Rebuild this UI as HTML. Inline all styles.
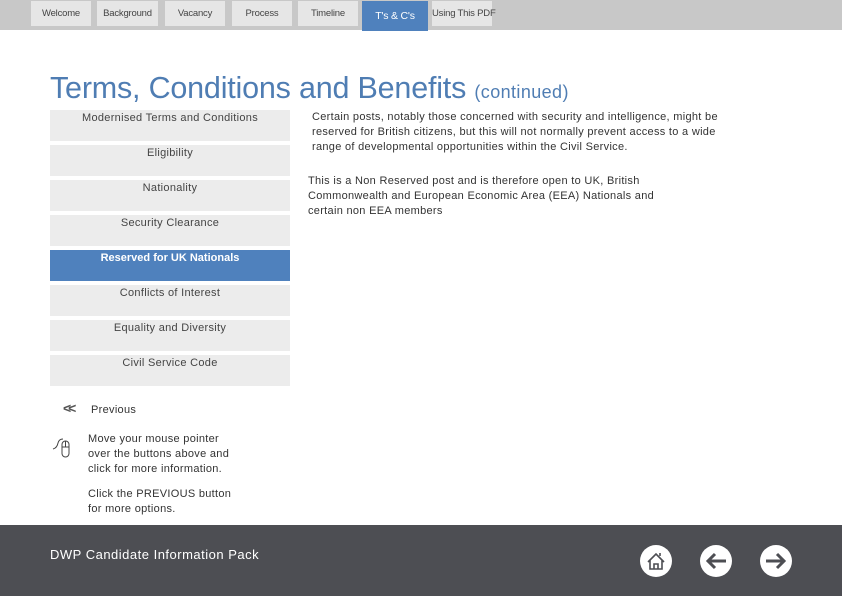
<!DOCTYPE html>
<html><head><style>
*{margin:0;padding:0;box-sizing:border-box}
body{width:842px;height:596px;position:relative;background:#fff;font-family:"Liberation Sans",Arial,sans-serif;overflow:hidden;color:#333}
.nav{position:absolute;left:0;top:0;width:842px;height:30px;background:#c8c8c8}
.tab{position:absolute;top:1px;height:25px;background:#e6e6e6;font-size:9.5px;color:#444;text-align:center;line-height:25px;white-space:nowrap;letter-spacing:-0.2px}
.tab.act{background:#4f81bd;color:#fff;height:30px;line-height:31px;font-size:10.5px}
h1{position:absolute;left:50px;top:71px;font-weight:normal;font-size:30.5px;color:#4f7db3;letter-spacing:-0.2px;white-space:nowrap}
h1 span{font-size:18px;letter-spacing:0.4px}
.btn{position:absolute;left:50px;width:240px;height:31px;background:#ececec;font-size:11px;color:#444;text-align:center;padding-top:2px;letter-spacing:0.3px}
.btn.act{background:#4f81bd;color:#fff;font-weight:bold;letter-spacing:0}
.txt{position:absolute;font-size:11px;line-height:15px;color:#333;letter-spacing:0.3px}
.foot{position:absolute;left:0;top:525px;width:842px;height:71px;background:#4d4e53}
.ic{position:absolute;top:545px;width:32px;height:32px;border-radius:50%;background:#fff}
</style></head><body>
<div class="nav">
<div class="tab" style="left:31px;width:60px">Welcome</div>
<div class="tab" style="left:97px;width:61px">Background</div>
<div class="tab" style="left:165px;width:60px">Vacancy</div>
<div class="tab" style="left:232px;width:60px">Process</div>
<div class="tab" style="left:298px;width:60px">Timeline</div>
<div class="tab act" style="left:362px;width:66px">T's &amp; C's</div>
<div class="tab" style="left:432px;width:60px">Using This PDF</div>
</div>
<h1>Terms, Conditions and Benefits <span>(continued)</span></h1>
<div class="btn" style="top:110px">Modernised Terms and Conditions</div>
<div class="btn" style="top:145px">Eligibility</div>
<div class="btn" style="top:180px">Nationality</div>
<div class="btn" style="top:215px">Security Clearance</div>
<div class="btn act" style="top:250px">Reserved for UK Nationals</div>
<div class="btn" style="top:285px">Conflicts of Interest</div>
<div class="btn" style="top:320px">Equality and Diversity</div>
<div class="btn" style="top:355px">Civil Service Code</div>
<div class="txt" style="left:312px;top:110px;width:430px">Certain posts, notably those concerned with security and intelligence, might be reserved for British citizens, but this will not normally prevent access to a wide range of developmental opportunities within the Civil Service.</div>
<div class="txt" style="left:308px;top:174px;width:370px">This is a Non Reserved post and is therefore open to UK, British Commonwealth and European Economic Area (EEA) Nationals and certain non EEA members</div>
<div class="txt" style="left:63px;top:401px;font-weight:bold;font-size:14px;color:#555;letter-spacing:-3px">&lt;&lt;</div>
<div class="txt" style="left:91px;top:403px">Previous</div>
<svg style="position:absolute;left:52px;top:436px" width="26" height="26" viewBox="0 0 26 26" fill="none" stroke="#444" stroke-width="1"><path d="M1 13 Q5 12 6 7 Q7 3 11 3"/><rect x="10" y="5" width="7" height="16" rx="3.5"/><path d="M10 11H17M13.5 5V11"/></svg>
<div class="txt" style="left:88px;top:432px;width:152px">Move your mouse pointer over the buttons above and click for more information.</div>
<div class="txt" style="left:88px;top:487px;width:160px">Click the PREVIOUS button for more options.</div>
<div class="foot"></div>
<div class="txt" style="left:50px;top:547px;font-size:13px;color:#fff;letter-spacing:0.5px">DWP Candidate Information Pack</div>
<div class="ic" style="left:640px"><svg width="32" height="32" viewBox="0 0 32 32" fill="none" stroke="#4d4e53" stroke-width="1.6"><path d="M8 17L16 9L24 17M10 15V24H22V15M14 24V19H18V24M20 11V8"/></svg></div>
<div class="ic" style="left:700px"><svg width="32" height="32" viewBox="0 0 32 32" fill="none" stroke="#4d4e53" stroke-width="3"><path d="M26 16H9M15 9L8 16L15 23"/></svg></div>
<div class="ic" style="left:760px"><svg width="32" height="32" viewBox="0 0 32 32" fill="none" stroke="#4d4e53" stroke-width="3"><path d="M6 16H23M17 9L24 16L17 23"/></svg></div>
</body></html>
